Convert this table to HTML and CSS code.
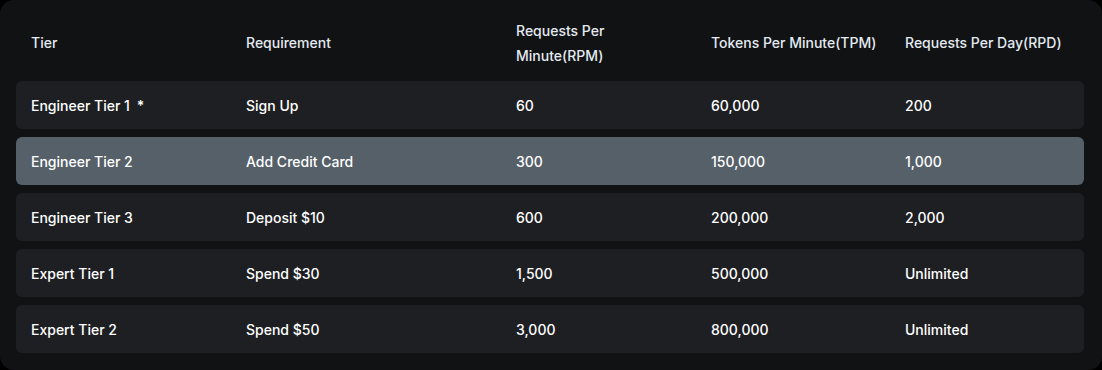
FILE: index.html
```html
<!DOCTYPE html>
<html lang="en">
<head>
<meta charset="utf-8">
<title>Tiers</title>
<link rel="stylesheet" href="styles.css">
</head>
<body>
<div class="panel">
  <div class="head">
    <div class="cell">Tier</div>
    <div class="cell">Requirement</div>
    <div class="cell">Requests Per<br>Minute(RPM)</div>
    <div class="cell">Tokens Per Minute(TPM)</div>
    <div class="cell">Requests Per Day(RPD)</div>
  </div>
  <div class="rows">
    <div class="row">
      <div class="cell">Engineer Tier 1 <span class="star">*</span></div>
      <div class="cell">Sign Up</div>
      <div class="cell">60</div>
      <div class="cell">60,000</div>
      <div class="cell">200</div>
    </div>
    <div class="row active">
      <div class="cell">Engineer Tier 2</div>
      <div class="cell">Add Credit Card</div>
      <div class="cell">300</div>
      <div class="cell">150,000</div>
      <div class="cell">1,000</div>
    </div>
    <div class="row">
      <div class="cell">Engineer Tier 3</div>
      <div class="cell">Deposit $10</div>
      <div class="cell">600</div>
      <div class="cell">200,000</div>
      <div class="cell">2,000</div>
    </div>
    <div class="row">
      <div class="cell">Expert Tier 1</div>
      <div class="cell">Spend $30</div>
      <div class="cell">1,500</div>
      <div class="cell">500,000</div>
      <div class="cell">Unlimited</div>
    </div>
    <div class="row">
      <div class="cell">Expert Tier 2</div>
      <div class="cell">Spend $50</div>
      <div class="cell">3,000</div>
      <div class="cell">800,000</div>
      <div class="cell">Unlimited</div>
    </div>
  </div>
</div>
</body>
</html>
```

FILE: styles.css
```css
html, body {
  margin: 0;
  padding: 0;
  background: #000;
}
body {
  width: 1102px;
  height: 370px;
  font-family: Inter, "Noto Sans", sans-serif;
  font-size: 14px;
  -webkit-font-smoothing: antialiased;
}
.panel {
  box-sizing: border-box;
  width: 1102px;
  height: 370px;
  background: #111214;
  border-radius: 14px;
  padding: 0 18px 17px 16px;
}
.head, .row {
  display: grid;
  grid-template-columns: 215px 270px 195px 194px 1fr;
  align-items: center;
}
.head {
  box-sizing: border-box;
  height: 81px;
  padding-top: 4px;
  color: #e4eaf1;
  font-weight: 500;
  line-height: 25px;
}
.head .cell, .row .cell {
  padding-left: 15px;
}
.rows {
  display: flex;
  flex-direction: column;
  gap: 8px;
}
.row {
  height: 48px;
  background: #1e1f23;
  border-radius: 6px;
  color: #ffffff;
  font-weight: 500;
}
.row.active {
  background: #566069;
}
.star {
  margin-left: 3px;
  font-weight: 600;
}
```
